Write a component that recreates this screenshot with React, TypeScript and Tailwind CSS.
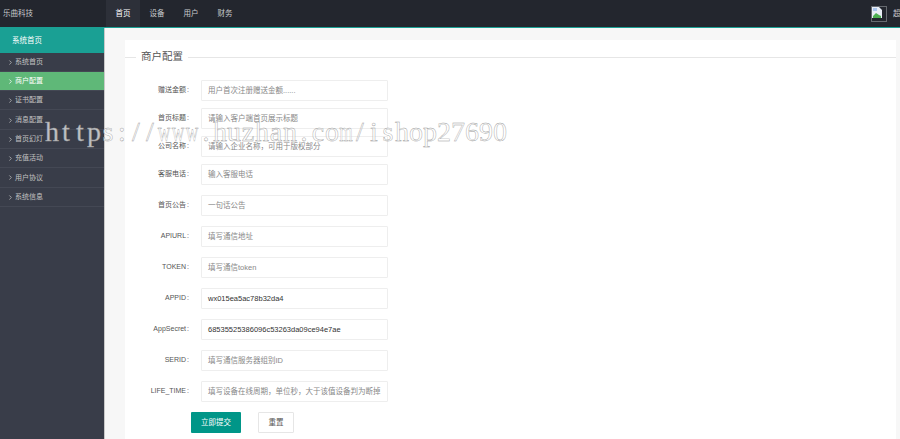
import { ChevronRight } from "lucide-react";

const FONT = "font-['Liberation_Sans','Noto_Sans_CJK_SC',sans-serif]";

const WATERMARK = "https://www.huzhan.com/ishop27690";

const navItems = ["首页", "设备", "用户", "财务"];

const menuItems = [
  "系统首页",
  "商户配置",
  "证书配置",
  "消息配置",
  "首页幻灯",
  "充值活动",
  "用户协议",
  "系统信息",
];

interface Field {
  label: string;
  placeholder?: string;
  value?: string;
}

const fields: Field[] = [
  { label: "赠送金额", placeholder: "用户首次注册赠送金额......" },
  { label: "首页标题", placeholder: "请输入客户端首页展示标题" },
  { label: "公司名称", placeholder: "请输入企业名称，可用于版权部分" },
  { label: "客服电话", placeholder: "输入客服电话" },
  { label: "首页公告", placeholder: "一句话公告" },
  { label: "APIURL", placeholder: "填写通信地址" },
  { label: "TOKEN", placeholder: "填写通信token" },
  { label: "APPID", value: "wx015ea5ac78b32da4" },
  { label: "AppSecret", value: "68535525386096c53263da09ce94e7ae" },
  { label: "SERID", placeholder: "填写通信服务器组别ID" },
  { label: "LIFE_TIME", placeholder: "填写设备在线周期，单位秒，大于该值设备判为断掉" },
];

function Header() {
  return (
    <header className="flex h-[28px] shrink-0 items-stretch border-b border-[#1aa094] bg-[#23262e] text-[7.5px] text-[#c8cacd]">
      <div className="flex w-[106px] shrink-0 items-center pl-[3px]">乐曲科技</div>
      <nav className="flex">
        {navItems.map((item, i) => (
          <span
            key={item}
            className={`flex w-[34px] items-center justify-center ${i === 0 ? "bg-[#2d3039] text-white" : ""}`}
          >
            {item}
          </span>
        ))}
      </nav>
      <div className="ml-auto flex items-center gap-[6px] overflow-hidden">
        <span className="flex h-[16px] w-[16px] items-start border border-[#666a70]">
          <svg width="10" height="11" viewBox="0 0 10 11">
            <path d="M0 0h7l3 3v8H0z" fill="#e8edf5" />
            <path d="M1 9l3-3 3 2 2 1v2H1z" fill="#4caf50" />
            <path d="M1 1h4v3H1z" fill="#a9c4ec" />
          </svg>
        </span>
        <span className="w-[7px] overflow-hidden whitespace-nowrap">超级管理员</span>
      </div>
    </header>
  );
}

function Sidebar() {
  return (
    <aside className="flex w-[105px] shrink-0 flex-col border-r border-[#c9c9c9] bg-[#393d49] text-[7px] text-[#c2c2c2]">
      <div className="flex h-[24.5px] items-center bg-[#1aa094] pl-[12px] text-[7.5px] text-white">系统首页</div>
      <ul>
        {menuItems.map((item, i) => (
          <li
            key={item}
            className={`flex h-[19.3px] items-center border-b border-[#444854] pl-[7px] pt-[1px] ${i === 1 ? "bg-[#5fb878] text-white" : ""}`}
          >
            <ChevronRight size={7} strokeWidth={2.5} className="mr-[1px]" />
            {item}
          </li>
        ))}
      </ul>
    </aside>
  );
}

function FormRow({ field, index }: { field: Field; index: number }) {
  return (
    <div className={`flex h-[21px] items-center ${index < 3 ? "mb-[7px]" : "mb-[10px]"}`}>
      <label className="w-[64px] shrink-0 whitespace-nowrap text-right text-[7px] text-[#555]">
        {field.label}
        <span className="ml-[1px]">:</span>
      </label>
      <div
        className={`ml-[12px] flex h-full w-[187px] items-center overflow-hidden whitespace-nowrap rounded-[1px] border border-[#eeeeee] bg-white pl-[6px] text-[7.5px] ${field.value ? "text-[#333]" : "text-[#888]"}`}
      >
        {field.value ?? field.placeholder}
      </div>
    </div>
  );
}

function Watermark() {
  return (
    <div className="pointer-events-none absolute left-[45px] top-[116px] flex font-['Liberation_Serif',serif] text-[28px] leading-[32px] text-white/70 [-webkit-text-stroke:0.4px_#999999]">
      {WATERMARK.split("").map((char, i) => (
        <span
          key={i}
          className={`flex w-[14px] justify-center ${char === "w" || char === "m" ? "scale-x-[0.62]" : ""}`}
        >
          {char}
        </span>
      ))}
    </div>
  );
}

export default function App() {
  return (
    <div className={`relative flex h-[439px] w-[900px] flex-col overflow-hidden bg-[#f7f7f7] ${FONT}`}>
      <Header />
      <div className="flex min-h-0 flex-1">
        <Sidebar />
        <main className="min-w-0 flex-1 pl-[20px] pt-[12px]">
          <div className="h-full w-[771px] bg-white">
            <div className="flex h-[34px] items-center">
              <div className="h-px w-[11px] bg-[#e6e6e6]" />
              <span className="px-[5px] text-[10.5px] text-[#555]">商户配置</span>
              <div className="h-px flex-1 bg-[#e6e6e6]" />
            </div>
            <form className="pt-[6px]">
              {fields.map((field, i) => (
                <FormRow key={field.label} field={field} index={i} />
              ))}
              <div className="ml-[66px] flex h-[21px] gap-[17px] text-[7.5px]">
                <span className="flex w-[50px] items-center justify-center rounded-[1px] bg-[#009688] text-white">
                  立即提交
                </span>
                <span className="flex w-[36px] items-center justify-center rounded-[1px] border border-[#e6e6e6] bg-white text-[#555]">
                  重置
                </span>
              </div>
            </form>
          </div>
        </main>
      </div>
      <Watermark />
    </div>
  );
}
